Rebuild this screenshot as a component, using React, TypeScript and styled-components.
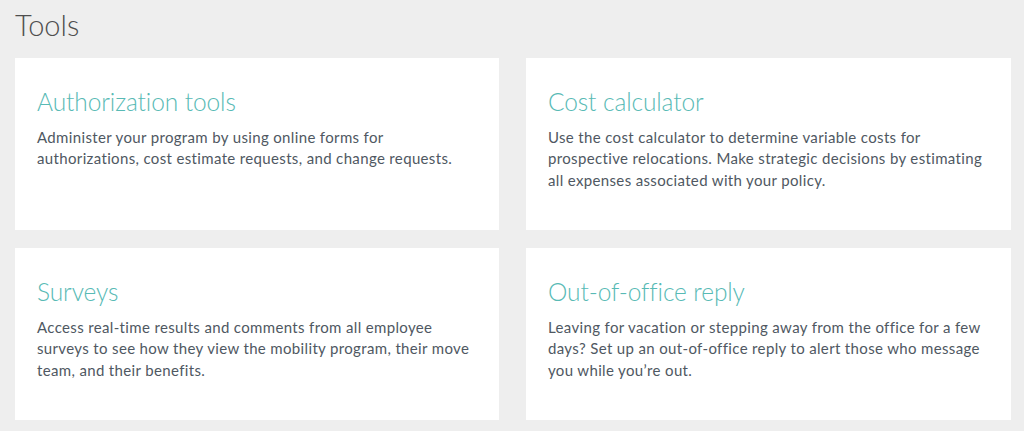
import React from "react";
import styled, { createGlobalStyle } from "styled-components";

const Global = createGlobalStyle`
  html, body { margin: 0; padding: 0; background: #eeeeee; }
  body { font-family: "Lato", "Liberation Sans", sans-serif; }
`;

const Page = styled.div`
  padding: 6px 13px 12px 15px;
  background: #eeeeee;
`;

const Title = styled.h1`
  margin: 0 0 14px 0;
  font-size: 29px;
  font-weight: 300;
  line-height: 38px;
  color: #4e4e4e;
`;

const Grid = styled.div`
  display: grid;
  grid-template-columns: 484px 485px;
  column-gap: 27px;
  row-gap: 18px;
`;

const Card = styled.div`
  background: #ffffff;
  height: 172px;
  box-sizing: border-box;
  padding: 28px 22px 0 22px;
`;

const CardTitle = styled.h2`
  margin: 0 0 9px 0;
  font-size: 24.5px;
  font-weight: 300;
  letter-spacing: -0.1px;
  line-height: 32px;
  color: #58bab5;
`;

const CardText = styled.p`
  margin: 0;
  font-size: 15px;
  letter-spacing: 0.35px;
  line-height: 21.4px;
  color: #4f5862;
`;

const items = [
  {
    title: "Authorization tools",
    text: ["Administer your program by using online forms for", "authorizations, cost estimate requests, and change requests."],
  },
  {
    title: "Cost calculator",
    text: [
      "Use the cost calculator to determine variable costs for",
      "prospective relocations. Make strategic decisions by estimating",
      "all expenses associated with your policy.",
    ],
  },
  {
    title: "Surveys",
    text: [
      "Access real-time results and comments from all employee",
      "surveys to see how they view the mobility program, their move",
      "team, and their benefits.",
    ],
  },
  {
    title: "Out-of-office reply",
    text: [
      "Leaving for vacation or stepping away from the office for a few",
      "days? Set up an out-of-office reply to alert those who message",
      "you while you\u2019re out.",
    ],
  },
];

export default function App() {
  return (
    <>
      <Global />
      <Page>
        <Title>Tools</Title>
        <Grid>
          {items.map((it) => (
            <Card key={it.title}>
              <CardTitle>{it.title}</CardTitle>
              <CardText>
                {it.text.map((l, i) => (
                  <React.Fragment key={i}>
                    {l}
                    {i < it.text.length - 1 && <br />}
                  </React.Fragment>
                ))}
              </CardText>
            </Card>
          ))}
        </Grid>
      </Page>
    </>
  );
}
